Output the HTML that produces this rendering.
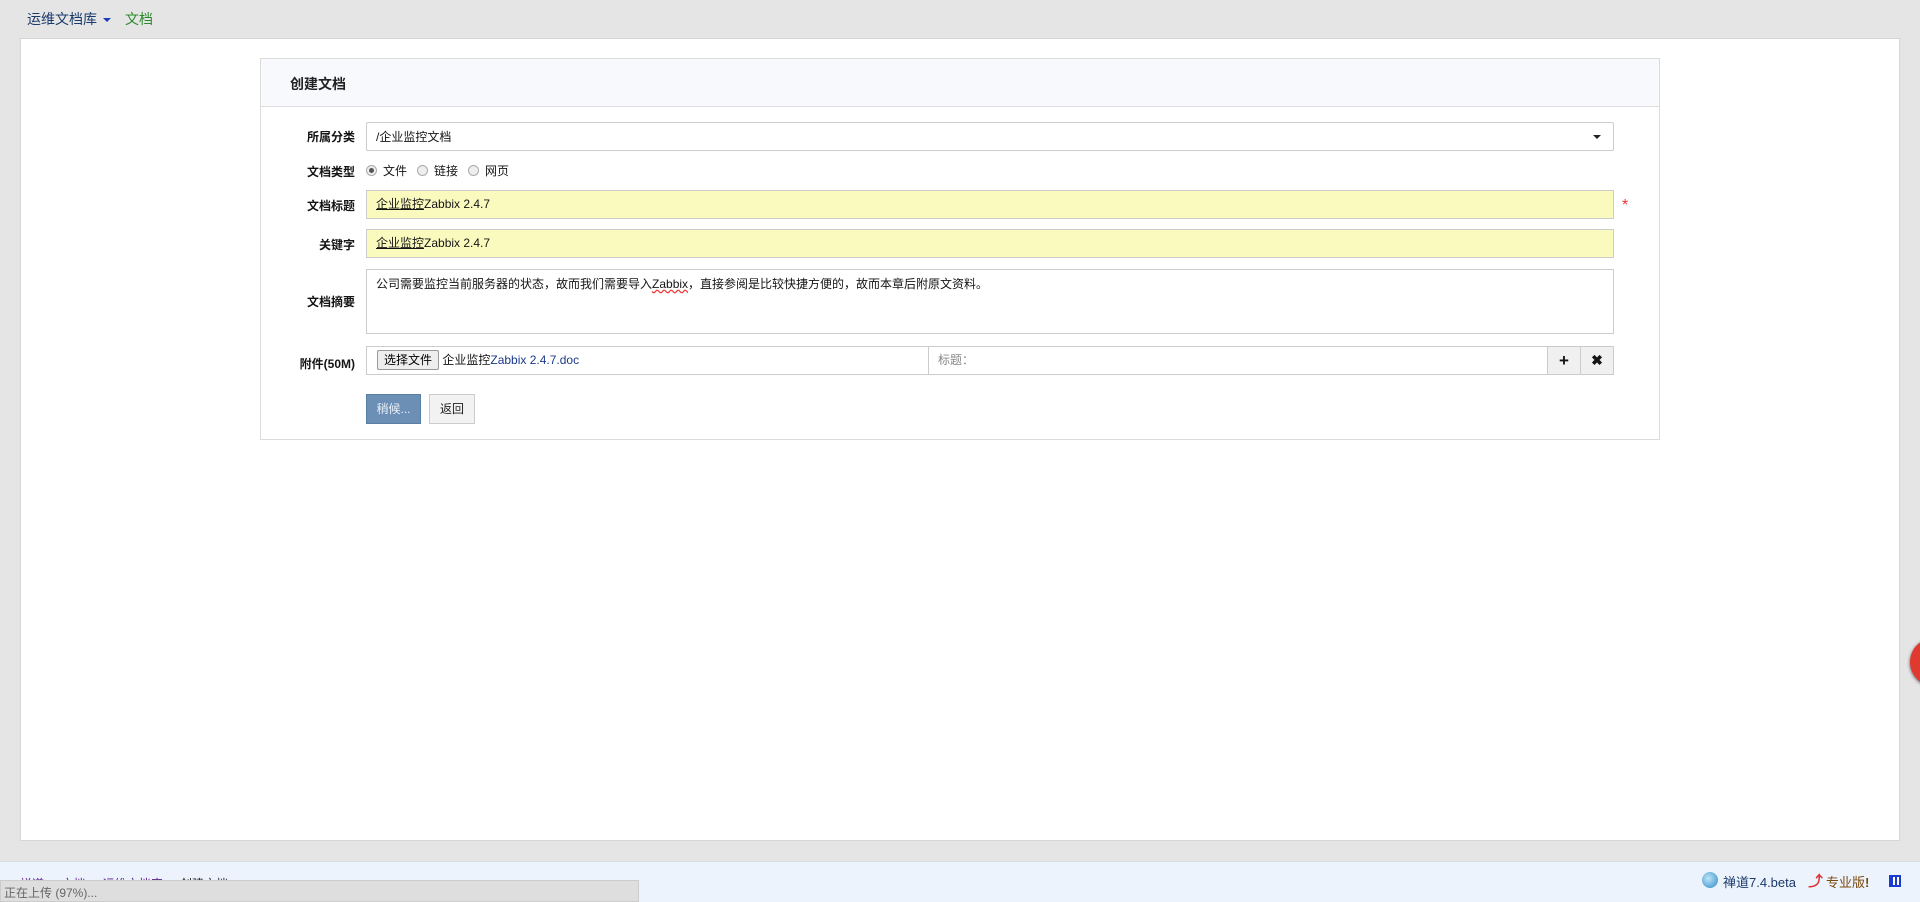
<!DOCTYPE html>
<html><head><meta charset="utf-8"><style>
*{box-sizing:border-box;margin:0;padding:0}
body{width:1920px;height:902px;background:#e5e5e5;font-family:"Liberation Sans","Noto Sans CJK SC",sans-serif;font-size:12px;color:#141414;position:relative;overflow:hidden}
.nav{position:absolute;top:9px;left:27px;font-size:14px;color:#03c}
.nav .a{color:#1a3a6a}
.caret{display:inline-block;width:0;height:0;border-left:4px solid transparent;border-right:4px solid transparent;border-top:4px solid #1a3cc0;vertical-align:middle;margin-left:6px}
.main{position:absolute;left:20px;top:38px;width:1880px;height:803px;background:#fff;border:1px solid #d6d6d6}
.panel{position:absolute;left:260px;top:58px;width:1400px;height:382px;border:1px solid #dcdcdc}
.ph{height:48px;background:#f8f9fc;border-bottom:1px solid #ddd;padding:15px 0 0 29px;font-size:14px;font-weight:bold;color:#222}
.lbl{position:absolute;right:1304px;font-weight:bold;text-align:right;white-space:nowrap}
.f{position:absolute;left:105px;width:1248px;border:1px solid #ccc;background:#fff;padding:0 9px;line-height:27px;font-size:12px}
.y{background:#fafabe}
.u{text-decoration:underline}
.rad{display:inline-block;width:11px;height:11px;border:1px solid #aaa;border-radius:50%;background:#eee;vertical-align:-1px;margin-right:6px;position:relative}
.rad.on:after{content:"";position:absolute;left:2px;top:2px;width:5px;height:5px;border-radius:50%;background:#555}
.btn{position:absolute;height:30px;line-height:28px;border:1px solid #ccc;font-size:12px;text-align:center}
</style></head><body>
<div class="nav"><span class="a">运维文档库</span><span class="caret"></span><span style="color:#2a8a2a;margin-left:14px">文档</span></div>
<div class="main"></div>
<div class="panel">
<div class="ph">创建文档</div>
<div class="lbl" style="top:69px">所属分类</div>
<div class="f" style="top:63px;height:29px;border-radius:2px;line-height:28px">/企业监控文档<span style="position:absolute;right:12px;top:12px;border-left:4px solid transparent;border-right:4px solid transparent;border-top:4px solid #222"></span></div>
<div class="lbl" style="top:104px">文档类型</div>
<div style="position:absolute;left:105px;top:103px"><span class="rad on"></span>文件 &nbsp;&nbsp;<span class="rad"></span>链接 &nbsp;&nbsp;<span class="rad"></span>网页</div>
<div class="lbl" style="top:138px">文档标题</div>
<div class="f y" style="top:131px;height:29px"><span class="u">企业监控</span>Zabbix 2.4.7</div>
<div style="position:absolute;left:1361px;top:138px;color:#e33;font-size:16px">*</div>
<div class="lbl" style="top:177px">关键字</div>
<div class="f y" style="top:170px;height:29px"><span class="u">企业监控</span>Zabbix 2.4.7</div>
<div class="lbl" style="top:234px">文档摘要</div>
<div class="f" style="top:210px;height:65px;line-height:16px;padding-top:6px">公司需要监控当前服务器的状态，故而我们需要导入<span style="text-decoration:underline wavy #e33">Zabbix</span>，直接参阅是比较快捷方便的，故而本章后附原文资料。</div>
<div class="lbl" style="top:296px">附件(50M)</div>
<div class="f" style="top:287px;height:29px;padding:0 0 0 10px">
<span style="display:inline-block;border:1px solid #999;background:#eee;line-height:18px;padding:0 6px;border-radius:2px;color:#000">选择文件</span> 企业监控<span style="color:#1a3a8a">Zabbix 2.4.7.doc</span>
<div style="position:absolute;left:561px;top:0;bottom:0;border-left:1px solid #ccc;padding-left:9px;color:#888">标题：</div>
<div style="position:absolute;right:33px;top:0;width:33px;height:27px;border-left:1px solid #ccc;background:#f0f0f0;text-align:center;font-weight:bold;font-size:17px">+</div>
<div style="position:absolute;right:0;top:0;width:33px;height:27px;border-left:1px solid #ccc;background:#f0f0f0;text-align:center;font-weight:bold;font-size:14px">✖</div>
</div>
<div class="btn" style="left:105px;top:335px;width:55px;background:#6b8fb5;border-color:#5a7fa5;color:#eaf0f7">稍候...</div>
<div class="btn" style="left:168px;top:335px;width:46px;background:#f2f2f2;color:#222">返回</div>
</div>
<div style="position:absolute;left:1910px;top:638px;width:48px;height:48px;border-radius:50%;background:#e03a30;box-shadow:0 1px 3px #555"></div>
<div style="position:absolute;left:0;top:861px;width:1920px;height:41px;background:#edf3fc;border-top:1px solid #d8dde6"></div>
<div style="position:absolute;left:20px;top:875px;color:#551a8b;font-size:12px">禅道 &nbsp;›&nbsp; 文档 &nbsp;›&nbsp; 运维文档库 &nbsp;›&nbsp; <span style="color:#222">创建文档</span></div>
<div style="position:absolute;left:0;top:880px;width:639px;height:22px;background:#dedede;border:1px solid #ccc;color:#666;padding:3px 3px;font-size:12px">正在上传 (97%)...</div>
<div style="position:absolute;left:1702px;top:872px;width:16px;height:16px;border-radius:50%;background:radial-gradient(circle at 40% 40%,#bfe4f7,#2a8ac8)"></div>
<div style="position:absolute;left:1723px;top:872px;color:#1a3a6a;font-size:13px">禅道7.4.beta</div>
<div style="position:absolute;left:1808px;top:870px;color:#d33;font-size:15px;font-weight:bold">⤴</div>
<div style="position:absolute;left:1826px;top:872px;color:#7a4a10;font-size:13px">专业版<b>!</b></div>
<div style="position:absolute;left:1889px;top:875px;width:12px;height:12px;border:2px solid #1a3cd0;background:repeating-linear-gradient(90deg,#1a3cd0 0 2px,#fff 2px 4px)"></div>
</body></html>
